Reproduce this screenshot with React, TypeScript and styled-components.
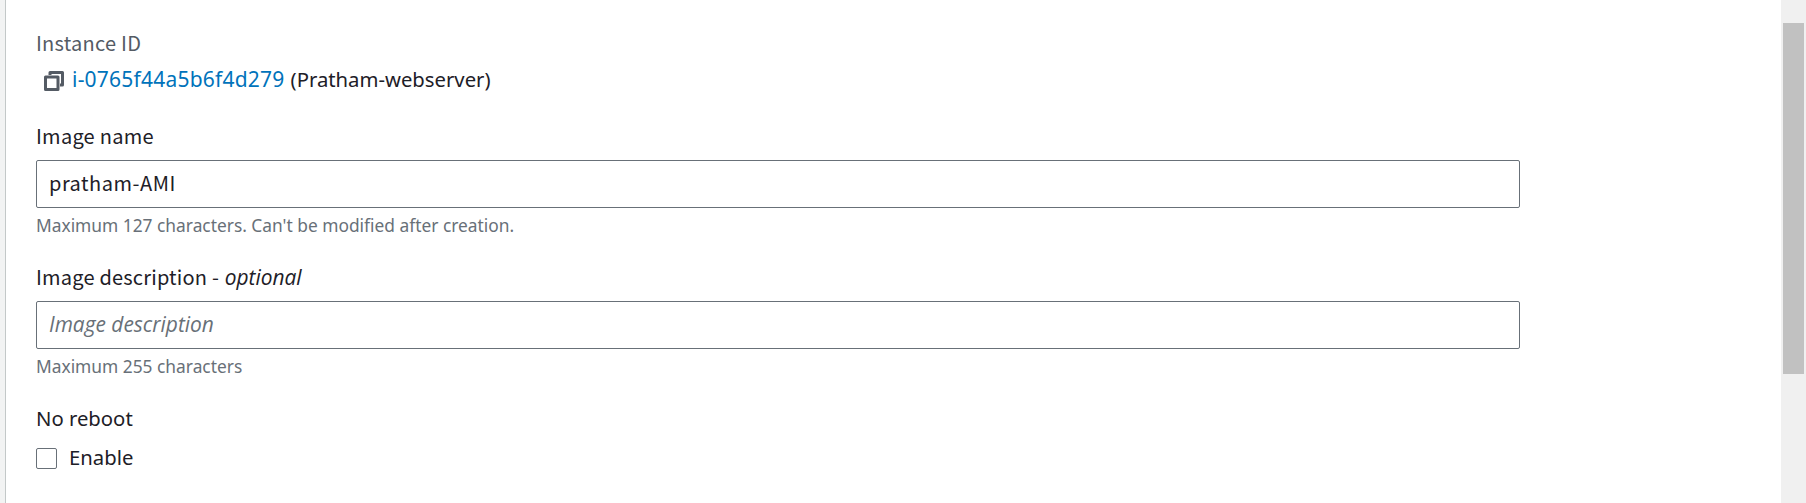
import React from 'react';
import styled, { createGlobalStyle } from 'styled-components';

const GlobalStyle = createGlobalStyle`
  * { box-sizing: border-box; }
  body {
    margin: 0;
    background: #fff;
    color: #1d2027;
    font: 20px/30px "Noto Sans CJK SC", "Noto Sans", sans-serif;
  }
`;

const Page = styled.div`
  display: flex;
  height: 503px;
  overflow: hidden;
`;

const Gutter = styled.div`
  width: 6px;
  flex: none;
  background: #f2f3f3;
  border-right: 1px solid #c3c8c8;
`;

const Form = styled.main`
  flex: 1;
  display: flex;
  flex-direction: column;
  gap: 26px;
  padding: 28px 0 0 30px;
`;

const Field = styled.section`
  width: 1484px;
  display: flex;
  flex-direction: column;
`;

const Text = styled.span<{ $size?: number }>`
  font-family: "Noto Sans", sans-serif;
  font-size: ${(p) => p.$size ?? 20.3}px;
  white-space: pre;
`;

const Label = styled.label<{ $muted?: boolean; $spacing?: number }>`
  color: ${(p) => (p.$muted ? '#545b64' : '#1d2027')};
  letter-spacing: ${(p) => p.$spacing ?? 0.25}px;
  white-space: pre;
`;

const Optional = styled.em`
  margin-left: 1px;
  font: italic 20.9px/28px "Open Sans", sans-serif;
  letter-spacing: 0;
`;

const InstanceRow = styled.div`
  display: flex;
  align-items: center;
  height: 30px;
  margin: 6px 0 1px;
  padding-left: 7px;
`;

const CopyIcon = styled.svg`
  width: 22px;
  height: 22px;
  margin: 4px 7px 0 0;
`;

const InstanceLink = styled.a`
  color: #0073bb;
  font-family: "Noto Sans", sans-serif;
  font-size: 21px;
  letter-spacing: 0.22px;
  margin-right: 6px;
`;

const Input = styled.input`
  width: 100%;
  height: 48px;
  margin-top: 9px;
  padding: 0 12px 3px;
  border: 1px solid #687078;
  border-radius: 2px;
  outline: none;
  background: #fff;
  color: #1d2027;
  font: 20px/30px "Noto Sans CJK SC", sans-serif;
  letter-spacing: 0.5px;
  &::placeholder {
    color: #687078;
    opacity: 1;
    font: italic 20.9px/30px "Open Sans", sans-serif;
    letter-spacing: 0;
  }
`;

const Hint = styled.span`
  margin-top: 6px;
  color: #687078;
  font-family: "Noto Sans", sans-serif;
  font-size: 17.35px;
  line-height: 22px;
`;

const CheckRow = styled.label`
  display: flex;
  align-items: center;
  gap: 12px;
  height: 30px;
  margin-top: 9px;
`;

const Checkbox = styled.input`
  appearance: none;
  width: 21px;
  height: 21px;
  margin: 3px 0 0;
  border: 1px solid #687078;
  border-radius: 2px;
  background: #fff;
`;

const ScrollTrack = styled.div`
  width: 25px;
  flex: none;
  padding: 23px 2px 0;
  background: #f0f0f0;
`;

const ScrollThumb = styled.div`
  height: 351px;
  background: #c1c1c1;
`;

export default function App() {
  return (
    <Page>
      <GlobalStyle />
      <Gutter />
      <Form>
        <Field>
          <Label as="span" $muted>Instance ID</Label>
          <InstanceRow>
            <CopyIcon viewBox="0 0 22 22" fill="none" stroke="#545b64" strokeWidth="3" strokeLinejoin="round">
              <path d="M7 5V2.5H19.5V15H17" />
              <path d="M2.5 7H15V19.5H2.5Z" />
            </CopyIcon>
            <InstanceLink>i-0765f44a5b6f4d279</InstanceLink>
            <Text>(Pratham-webserver)</Text>
          </InstanceRow>
        </Field>
        <Field>
          <Label htmlFor="name">Image name</Label>
          <Input id="name" defaultValue="pratham-AMI" />
          <Hint>Maximum 127 characters. Can't be modified after creation.</Hint>
        </Field>
        <Field>
          <Label htmlFor="description" $spacing={0.2}>
            Image description - <Optional>optional</Optional>
          </Label>
          <Input id="description" placeholder="Image description" />
          <Hint>Maximum 255 characters</Hint>
        </Field>
        <Field>
          <Text>No reboot</Text>
          <CheckRow>
            <Checkbox type="checkbox" />
            <Text>Enable</Text>
          </CheckRow>
        </Field>
      </Form>
      <ScrollTrack>
        <ScrollThumb />
      </ScrollTrack>
    </Page>
  );
}
